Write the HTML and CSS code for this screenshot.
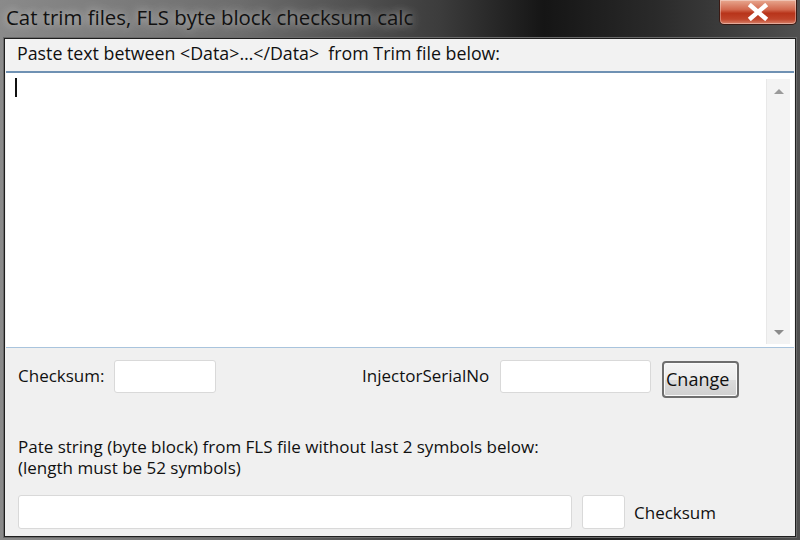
FILE: index.html
```html
<!DOCTYPE html>
<html>
<head>
<meta charset="utf-8">
<link rel="stylesheet" href="styles.css">
</head>
<body>
<div class="window">
  <div class="titlebar">
    <span class="title">Cat trim files, FLS byte block checksum calc</span>
    <div class="close">
      <svg width="26" height="18" viewBox="0 0 26 18"><path d="M6 3 L20 15 M20 3 L6 15" stroke="#fff" stroke-width="4.5" stroke-linecap="square"/></svg>
    </div>
  </div>
  <div class="client">
    <div class="label top-label">Paste text between &lt;Data&gt;…&lt;/Data&gt;&nbsp; from Trim file below:</div>
    <div class="textarea">
      <div class="text-content"><span class="caret"></span></div>
      <div class="scrollbar">
        <span class="arrow up"></span>
        <span class="arrow down"></span>
      </div>
    </div>
    <div class="row">
      <span class="label lbl-checksum">Checksum:</span>
      <span class="input in-checksum"></span>
      <span class="label lbl-serial">InjectorSerialNo</span>
      <span class="input in-serial"></span>
      <span class="button">Cnange</span>
    </div>
    <div class="label info">Pate string (byte block) from FLS file without last 2 symbols below:<br>(length must be 52 symbols)</div>
    <div class="row bottom-row">
      <span class="input in-block"></span>
      <span class="input in-small"></span>
      <span class="label lbl-cs2">Checksum</span>
    </div>
  </div>
</div>
</body>
</html>
```

FILE: styles.css
```css
html, body {
  margin: 0;
  padding: 0;
}
body {
  width: 800px;
  height: 540px;
  overflow: hidden;
  background: #2a2a2a;
  font-family: "Open Sans", "Noto Sans", sans-serif;
}
.window {
  width: 800px;
  height: 540px;
  display: flex;
  flex-direction: column;
  background: linear-gradient(90deg, #8a8a8a 0%, #6d6d6d 30%, #3c3c3c 55%, #151515 68%, #2a2a2a 82%, #505050 100%);
}
.titlebar {
  height: 38px;
  flex: none;
  display: flex;
  align-items: flex-start;
  justify-content: space-between;
  padding-left: 6px;
  padding-right: 3px;
}
.title {
  font-family: "Open Sans", sans-serif;
  font-size: 20.4px;
  line-height: 34px;
  color: #111;
  text-shadow: 0 0 8px rgba(255,255,255,0.55), 0 0 14px rgba(255,255,255,0.35);
}
.close {
  width: 78px;
  height: 25px;
  border: 1px solid #3a1a14;
  border-top: none;
  border-radius: 0 0 5px 5px;
  background: linear-gradient(180deg, #e8a890 0%, #d2684e 40%, #b8341a 55%, #c0442a 80%, #d8826a 100%);
  box-shadow: inset 0 0 0 1px rgba(255,255,255,0.35);
  display: flex;
  align-items: center;
  justify-content: center;
  box-sizing: border-box;
}
.client {
  flex: 1;
  margin: 0 4px 3px 4px;
  background: #f0f0f0;
  border: 1px solid #1e1e1e;
  box-shadow: 0 0 0 1px #6a6a6a;
  display: flex;
  flex-direction: column;
  color: #101010;
  font-size: 17px;
}
.label {
  white-space: nowrap;
}
.top-label {
  height: 32px;
  line-height: 28px;
  padding-left: 12px;
  background: #f2f2f2;
  font-size: 17.8px;
}
.textarea {
  height: 274px;
  margin: 0 1px;
  border-top: 2px solid #6f91b3;
  border-bottom: 1px solid #a9c4dd;
  background: #fff;
  display: flex;
}
.text-content {
  flex: 1;
  padding: 5px 0 0 9px;
}
.caret {
  display: block;
  width: 2px;
  height: 19px;
  background: #111;
}
.scrollbar {
  width: 23px;
  margin: 6px 4px 3px 0;
  background: #f3f3f3;
  border-left: 1px solid #e8e8e8;
  display: flex;
  flex-direction: column;
  justify-content: space-between;
  align-items: center;
  padding: 10px 0 9px;
}
.arrow {
  width: 0;
  height: 0;
  border-left: 5px solid transparent;
  border-right: 5px solid transparent;
}
.arrow.up {
  border-bottom: 5px solid #9a9a9a;
}
.arrow.down {
  border-top: 5px solid #8c8c8c;
}
.row {
  display: flex;
  align-items: center;
  padding-left: 13px;
  margin-top: 12px;
  height: 38px;
}
.input {
  display: block;
  background: #fff;
  border: 1px solid #d9d9d9;
  border-radius: 3px;
  box-sizing: border-box;
  height: 33px;
  align-self: flex-start;
}
.lbl-checksum {
  width: 84px;
  margin-top: -8px;
}
.in-checksum {
  width: 102px;
  margin-left: 12px;
}
.lbl-serial {
  width: 126px;
  margin-left: 146px;
  margin-top: -8px;
}
.in-serial {
  width: 151px;
  margin-left: 12px;
}
.button {
  margin-left: 11px;
  margin-top: 1px;
  width: 77px;
  height: 37px;
  box-sizing: border-box;
  border: 2px solid #6e6e6e;
  border-radius: 4px;
  background: linear-gradient(180deg, #f4f4f4 0%, #ececec 50%, #dcdcdc 52%, #d0d0d0 100%);
  box-shadow: inset 0 0 0 1px #fafafa;
  font-size: 18px;
  line-height: 32px;
  padding-left: 2px;
  align-self: flex-start;
}
.info {
  margin-top: 38px;
  padding-left: 13px;
  line-height: 21px;
}
.bottom-row {
  margin-top: 17px;
  height: 34px;
}
.in-block {
  width: 554px;
  height: 34px;
}
.in-small {
  width: 43px;
  height: 34px;
  margin-left: 10px;
}
.lbl-cs2 {
  margin-left: 9px;
}
```
